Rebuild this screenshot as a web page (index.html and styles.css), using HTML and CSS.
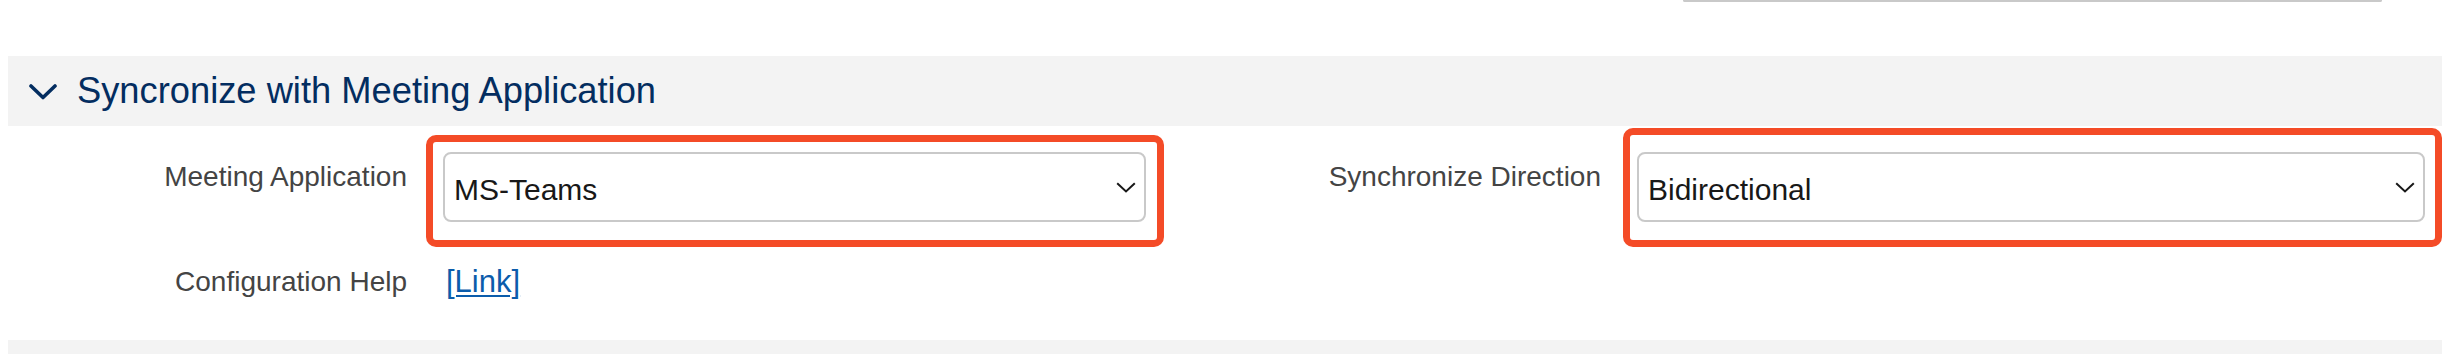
FILE: index.html
```html
<!DOCTYPE html>
<html lang="en">
<head>
  <meta charset="UTF-8" />
  <meta name="viewport" content="width=device-width, initial-scale=1.0" />
  <title>Syncronize with Meeting Application</title>
  <link rel="stylesheet" href="styles.css">
</head>
<body>
  <div class="prev-row">
    <div class="prev-input"></div>
  </div>

  <div class="section-header">
    <svg class="section-chevron" width="28" height="16" viewBox="0 0 28 16">
      <polyline points="2,2 14,13.5 26,2" fill="none" stroke="#032d60" stroke-width="3.6" stroke-linecap="round" stroke-linejoin="round" />
    </svg>
    <h2 class="section-title">Syncronize with Meeting Application</h2>
  </div>

  <div class="form-grid">
    <label class="field-label label-left">Meeting Application</label>
    <div class="highlight highlight-left">
      <div class="combobox combobox-left">
        <span class="combobox-value">MS-Teams</span>
        <svg class="combobox-chevron" width="20" height="11" viewBox="0 0 20 11">
          <polyline points="1.2,1.2 10,9.5 18.8,1.2" fill="none" stroke="#181818" stroke-width="2" />
        </svg>
      </div>
    </div>
    <label class="field-label label-right">Synchronize Direction</label>
    <div class="highlight highlight-right">
      <div class="combobox combobox-right">
        <span class="combobox-value">Bidirectional</span>
        <svg class="combobox-chevron" width="20" height="11" viewBox="0 0 20 11">
          <polyline points="1.2,1.2 10,9.5 18.8,1.2" fill="none" stroke="#181818" stroke-width="2" />
        </svg>
      </div>
    </div>

    <span class="field-label label-left help-label">Configuration Help</span>
    <div class="help-value"><a href="#">[Link]</a></div>
  </div>

  <div class="section-footer"></div>
</body>
</html>
```

FILE: styles.css
```css
body {
  margin: 0;
  background: #ffffff;
  font-family: "Liberation Sans", Arial, sans-serif;
}

.prev-row {
  height: 56px;
}
.prev-input {
  margin-left: 1683px;
  width: 695px;
  height: 0;
  border: 2px solid #c9c9c9;
  border-top: none;
  border-radius: 0 0 8px 8px;
}

.section-header {
  display: flex;
  align-items: center;
  height: 70px;
  margin: 0 4px 0 8px;
  background: #f3f3f3;
}
.section-chevron {
  margin-left: 21px;
  margin-top: 2px;
}
.section-title {
  margin: 0 0 0 20px;
  font-size: 36.3px;
  font-weight: normal;
  line-height: 40px;
  color: #032d60;
}

.form-grid {
  display: grid;
  grid-template-columns: 418px 738px 459px 819px;
  row-gap: 19px;
  align-items: start;
  margin-left: 8px;
  padding-top: 2px;
}
.field-label {
  font-size: 28px;
  line-height: 32px;
  color: #444444;
  text-align: right;
  margin-top: 33px;
}
.label-left {
  padding-right: 19px;
}
.label-right {
  padding-right: 22px;
}
.help-label {
  margin-top: 0;
}

.highlight {
  border: 7px solid #f44b27;
  border-radius: 10px;
}
.highlight-left {
  margin-top: 7px;
  padding: 10px 11px 18px 10px;
}
.highlight-right {
  padding: 17px 10px 18px 7px;
}

.combobox {
  display: flex;
  align-items: center;
  justify-content: space-between;
  height: 66px;
  border: 2px solid #c9c9c9;
  border-radius: 8px;
  padding: 0 8px 0 9px;
  background: #ffffff;
}
.combobox-value {
  margin-top: 5px;
  font-size: 30px;
  line-height: 36px;
  color: #181818;
}
.combobox-chevron {
  margin-top: 1px;
}

.help-value {
  padding-left: 20px;
  font-size: 31px;
  line-height: 32px;
}
.help-value a {
  color: #0b5cab;
  text-decoration: underline;
  text-decoration-thickness: 2px;
  text-underline-offset: 3px;
}

.section-footer {
  height: 20px;
  margin: 42px 4px 0 8px;
  background: #f3f3f3;
}
```
